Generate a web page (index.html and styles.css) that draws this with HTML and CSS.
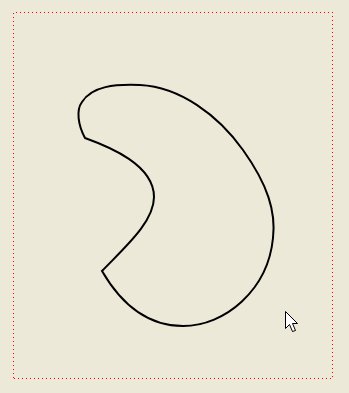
FILE: index.html
```html
<!DOCTYPE html>
<html>
<head>
<meta charset="utf-8">
<link rel="stylesheet" href="styles.css">
</head>
<body>
<div class="canvas">
  <div class="frame"></div>
  <svg class="drawing" width="349" height="393" viewBox="0 0 349 393" xmlns="http://www.w3.org/2000/svg">
    <path d="M102,271 C125,247 154,222 154,197 C154,165 110,147 85,138 C78,125 76,110 82,102 C92,86 115,84 140,85 C180,87 218,115 243,150 C268,185 276,212 273,238 C268,290 225,326 183,326 C145,326 120,302 102,271 Z" fill="none" stroke="#000" stroke-width="2" stroke-linejoin="miter"/>
    <polygon points="285.5,311.5 285.5,328.5 289.5,324.5 292.5,331.5 295.5,330.5 292.5,323.5 297.5,323.5" fill="#fff" stroke="#000" stroke-width="1"/>
  </svg>
</div>
</body>
</html>
```

FILE: styles.css
```css
html, body {
  margin: 0;
  padding: 0;
  background: #ece9d8;
}
.canvas {
  position: relative;
  width: 349px;
  height: 393px;
  padding: 12px 0 0 13px;
  box-sizing: border-box;
  overflow: hidden;
}
.frame {
  width: 320px;
  height: 367px;
  background-image:
    repeating-linear-gradient(to right, transparent 0 3px, #ff0000 3px 4px),
    repeating-linear-gradient(to right, transparent 0 1px, #ff0000 1px 2px, transparent 2px 4px),
    repeating-linear-gradient(to bottom, transparent 0 1px, #ff0000 1px 2px, transparent 2px 4px),
    repeating-linear-gradient(to bottom, #ff0000 0 1px, transparent 1px 4px);
  background-size: 100% 1px, 100% 1px, 1px 100%, 1px 100%;
  background-position: left top, left bottom, left top, right top;
  background-repeat: no-repeat;
}
.drawing {
  position: absolute;
  top: 0;
  left: 0;
  display: block;
}
```
